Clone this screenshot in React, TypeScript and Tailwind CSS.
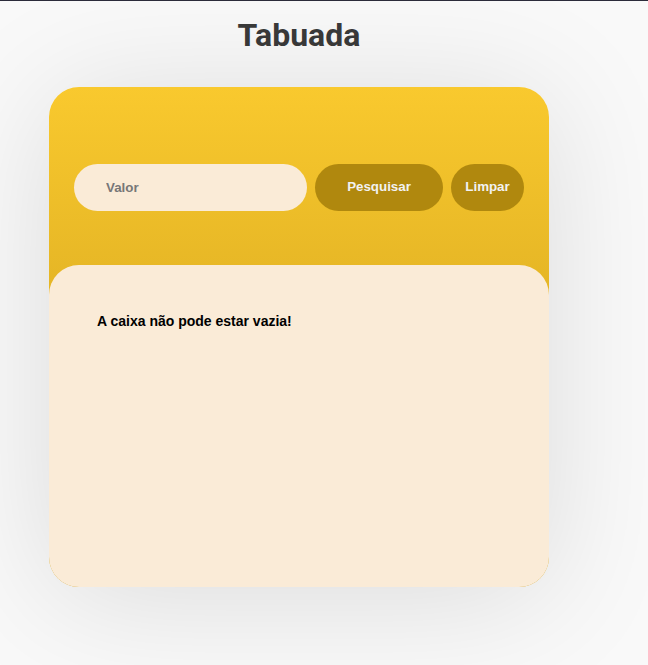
import React from "react";

export default function App() {
  return (
    <div className="min-h-[665px] w-full border-t border-[#2b2b3a] bg-[#f9f9f9] overflow-hidden">
      <div className="w-[598px] flex flex-col items-center">
        <h1
          className="mt-[16px] text-[32px] font-bold leading-[1.172] text-[#3a3a3a]"
          style={{ fontFamily: "Roboto, 'Liberation Sans', sans-serif" }}
        >
          Tabuada
        </h1>
        <div
          className="mt-[32px] w-[500px] h-[500px] rounded-[30px] flex flex-col bg-gradient-to-b from-[#f9c92e] to-[#c99a18] shadow-[0_10px_130px_rgba(0,0,0,0.12)]"
          style={{ fontFamily: "'Liberation Sans', Arial, sans-serif" }}
        >
          <div className="flex gap-2 px-[25px] pt-[77px] pb-[54px]">
            <input
              placeholder="Valor"
              className="flex-1 h-[47px] rounded-full bg-[#faebd7] pl-[32px] text-[13.333px] font-bold text-[#333] placeholder:text-[#777] outline-none"
            />
            <button className="w-[128px] h-[47px] rounded-full bg-[#b0880e] text-[13.333px] font-bold text-[#f2f2f2]">
              Pesquisar
            </button>
            <button className="w-[73px] h-[47px] rounded-full bg-[#b0880e] text-[13.333px] font-bold text-[#f2f2f2]">
              Limpar
            </button>
          </div>
          <div className="flex-1 rounded-[30px] bg-[#faebd7] px-[48px] pt-[48px]">
            <p className="text-[14px] font-bold text-black leading-[1.15]">
              A caixa não pode estar vazia!
            </p>
          </div>
        </div>
      </div>
    </div>
  );
}
